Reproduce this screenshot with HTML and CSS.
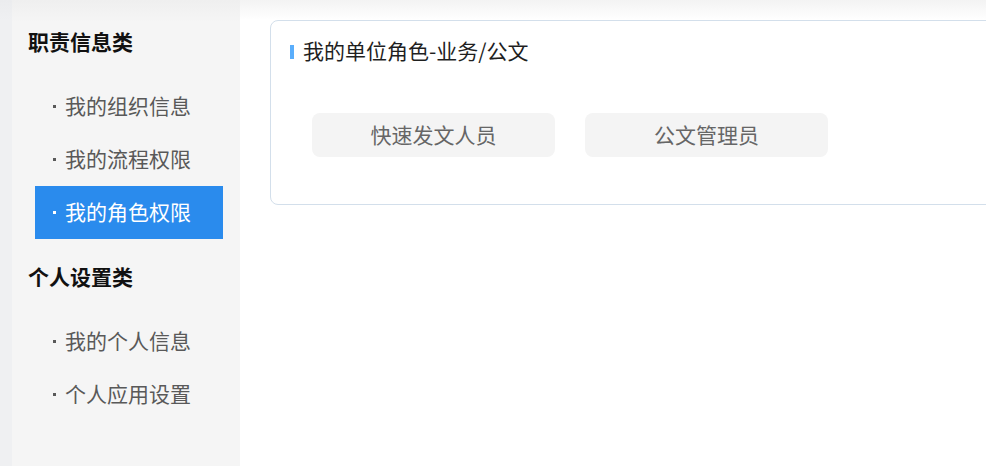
FILE: index.html
```html
<!DOCTYPE html>
<html lang="zh-CN">
<head>
<meta charset="utf-8">
<title>我的角色权限</title>
<link rel="stylesheet" href="styles.css">
</head>
<body>
<div class="page">
  <div class="edge"></div>
  <aside class="sidebar">
    <div class="group">
      <h3 class="group-title">职责信息类</h3>
      <ul class="menu">
        <li class="menu-item"><span class="dot"></span>我的组织信息</li>
        <li class="menu-item"><span class="dot"></span>我的流程权限</li>
        <li class="menu-item active"><span class="dot"></span>我的角色权限</li>
      </ul>
    </div>
    <div class="group">
      <h3 class="group-title">个人设置类</h3>
      <ul class="menu">
        <li class="menu-item"><span class="dot"></span>我的个人信息</li>
        <li class="menu-item"><span class="dot"></span>个人应用设置</li>
      </ul>
    </div>
  </aside>
  <main class="main">
    <section class="card">
      <div class="card-title"><span class="bar"></span>我的单位角色-业务/公文</div>
      <div class="roles">
        <div class="role">快速发文人员</div>
        <div class="role">公文管理员</div>
      </div>
    </section>
  </main>
</div>
</body>
</html>
```

FILE: styles.css
```css
* { box-sizing: border-box; }
html, body {
  margin: 0;
  padding: 0;
  width: 986px;
  height: 466px;
  overflow: hidden;
  font-family: "Noto Sans CJK SC", "Noto Sans", sans-serif;
  background: #fff;
}
.page {
  display: flex;
  height: 466px;
}
.edge {
  width: 12px;
  flex: none;
  background: linear-gradient(#ebecee, #eff0f2 20px);
}
.sidebar {
  width: 228px;
  flex: none;
  background: linear-gradient(#efefef, #f5f5f5 22px);
  padding-top: 28px;
}
.group + .group { margin-top: 24px; }
.group-title {
  margin: 0;
  padding-left: 16px;
  padding-bottom: 4px;
  height: 30px;
  display: flex;
  align-items: center;
  font-size: 21px;
  font-weight: 700;
  color: #111;
}
.menu {
  list-style: none;
  margin: 22px 0 0;
  padding: 0;
}
.menu-item {
  display: flex;
  align-items: center;
  height: 53px;
  margin: 0 17px 0 23px;
  padding: 0 0 3px 18px;
  font-size: 21px;
  color: #595959;
}
.menu-item.active {
  background: #2a8bed;
  color: #fff;
}
.dot {
  width: 12px;
  display: inline-flex;
  align-items: center;
  height: 30px;
  margin-top: 3px;
}
.dot::before {
  content: "";
  width: 3px;
  height: 3px;
  background: currentColor;
}
.main {
  flex: 1;
  overflow: hidden;
  background: linear-gradient(#f3f3f3, #fff 20px);
  padding: 20px 0 0 30px;
}
.card {
  width: 760px;
  height: 185px;
  border: 1px solid #d3dfeb;
  border-radius: 8px;
  background: #fff;
  padding: 14px 0 0 19px;
}
.card-title {
  display: flex;
  align-items: center;
  height: 30px;
  font-size: 21px;
  color: #1f1f1f;
}
.bar {
  width: 4px;
  height: 14px;
  background: #5aaefc;
  margin-right: 9px;
  margin-top: 4px;
}
.roles {
  display: flex;
  gap: 30px;
  margin-top: 48px;
  padding-left: 22px;
}
.role {
  width: 243px;
  height: 44px;
  border-radius: 8px;
  background: #f4f4f4;
  color: #666;
  font-size: 21px;
  padding-bottom: 2px;
  display: flex;
  align-items: center;
  justify-content: center;
}
```
